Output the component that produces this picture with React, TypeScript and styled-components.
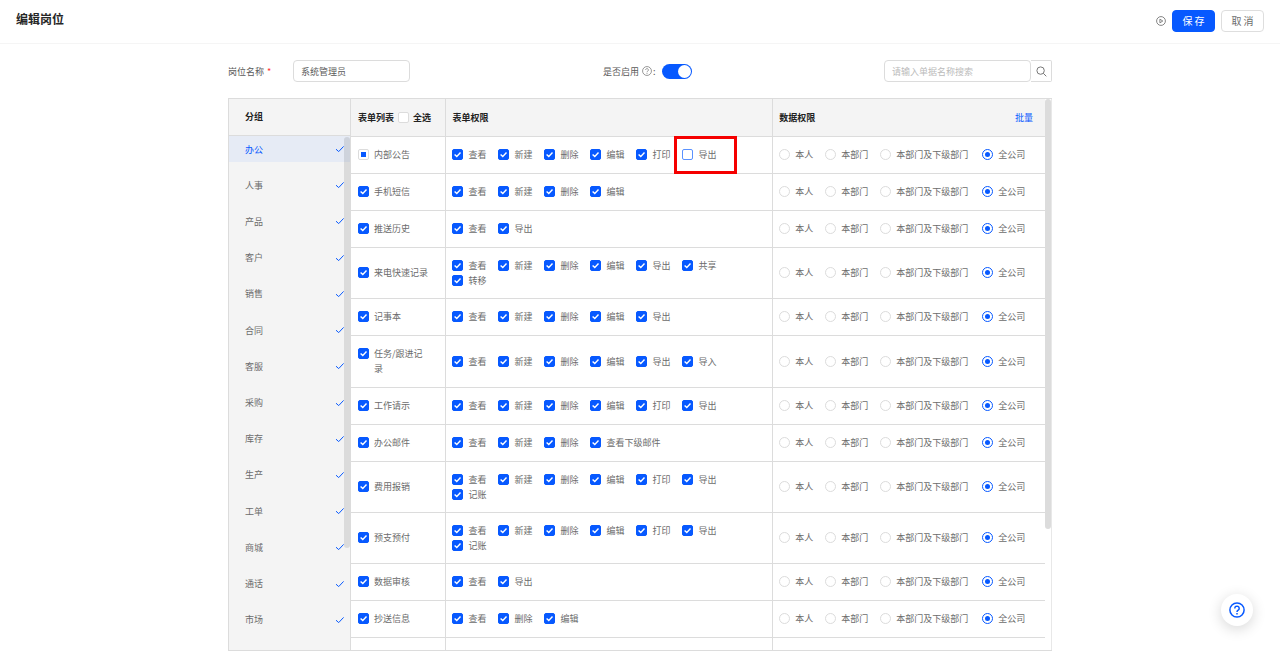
import React, { useState } from 'react';
import styled, { createGlobalStyle } from 'styled-components';

const GlobalStyle = createGlobalStyle`
  * { box-sizing: border-box; }
  body {
    margin: 0;
    background: #fff;
    color: #6c6c6c;
    font-family: "Noto Sans CJK SC", "Liberation Sans", sans-serif;
    font-size: 9px;
    line-height: 15px;
  }
  button, input { font: inherit; color: inherit; margin: 0; }
  button { cursor: pointer; }
`;

const BLUE = '#0759ff';
const LINE = '#dcdcdc';

const Page = styled.div`
  display: flex;
  flex-direction: column;
  height: 100vh;
  min-height: 400px;
`;

const Header = styled.header`
  display: flex;
  justify-content: space-between;
  align-items: flex-start;
  height: 44px;
  padding: 10px 16px 0;
  border-bottom: 1px solid #f5f5f5;
`;

const Title = styled.h1`
  margin: 0;
  font-size: 12px;
  line-height: 18px;
  font-weight: 700;
  color: #262626;
`;

const Actions = styled.div`
  display: flex;
  align-items: center;
  gap: 6px;
`;

const IconButton = styled.button`
  display: flex;
  padding: 0;
  border: 0;
  background: none;
  color: #777;
`;

const ActionButton = styled.button<{ $primary?: boolean }>`
  width: 43px;
  height: 22px;
  padding: 0;
  border-radius: 4px;
  border: 1px solid ${p => (p.$primary ? BLUE : '#dedede')};
  background: ${p => (p.$primary ? BLUE : '#fff')};
  color: ${p => (p.$primary ? '#fff' : '#6c6c6c')};
  font-size: 10px;
  line-height: 20px;
`;

const Main = styled.main`
  display: flex;
  flex-direction: column;
  flex: 1;
  min-height: 0;
  width: 100%;
  max-width: 824px;
  margin: 0 auto;
  padding: 16px 0;
`;

const FormRow = styled.form`
  display: grid;
  grid-template-columns: 375fr 281fr 168fr;
  align-items: center;
  margin-bottom: 16px;
`;

const Field = styled.div`
  display: flex;
  align-items: center;
  color: #5a5a5a;
`;

const NameLabel = styled.label`
  width: 65px;
`;

const Required = styled.span`
  margin-left: 3px;
  color: #f33;
`;

const TextInput = styled.input`
  width: 117px;
  height: 22px;
  padding: 0 7px;
  border: 1px solid ${LINE};
  border-radius: 4px;
  background: #fff;
`;

const HelpMark = styled.span`
  display: flex;
  margin: 0 1px 0 3px;
  color: #777;
`;

const Switch = styled.input`
  appearance: none;
  display: flex;
  align-items: center;
  width: 30px;
  height: 15px;
  margin-left: 6px;
  padding: 0 1px;
  border-radius: 8px;
  background: #bbb;
  &::before {
    content: '';
    width: 13px;
    height: 13px;
    border-radius: 50%;
    background: #fff;
  }
  &:checked {
    justify-content: flex-end;
    background: ${BLUE};
  }
`;

const SearchInput = styled(TextInput)`
  flex: 1;
  min-width: 0;
  &::placeholder { color: #bbb; }
`;

const SearchButton = styled.button`
  display: flex;
  align-items: center;
  justify-content: center;
  width: 21px;
  height: 22px;
  padding: 0;
  border: 1px solid ${LINE};
  border-left: 0;
  border-radius: 0 2px 2px 0;
  background: #fff;
  color: #777;
`;

const Panel = styled.div`
  display: flex;
  flex: 1;
  min-height: 0;
  border: 1px solid ${LINE};
  border-right: 0;
`;

const Groups = styled.nav`
  display: flex;
  flex-direction: column;
  width: 122px;
  background: #f4f4f4;
  border-right: 1px solid ${LINE};
`;

const GroupHead = styled.h2`
  margin: 0;
  height: 37px;
  padding: 0 16px;
  border-bottom: 1px solid ${LINE};
  font-size: 9px;
  line-height: 36px;
  font-weight: 700;
  color: #222;
`;

const GroupBody = styled.div`
  position: relative;
  flex: 1;
  min-height: 0;
  padding-bottom: 7px;
`;

const GroupList = styled.ul`
  display: flex;
  flex-direction: column;
  height: 100%;
  margin: 0;
  padding: 0;
  list-style: none;
`;

const GroupItem = styled.li`
  flex: 1;
`;

const GroupButton = styled.button<{ $active: boolean }>`
  display: flex;
  align-items: center;
  justify-content: space-between;
  width: 100%;
  height: 26px;
  padding: 0 5px 0 16px;
  border: 0;
  background: ${p => (p.$active ? '#e6ebf5' : 'transparent')};
  color: ${p => (p.$active ? BLUE : '#6c6c6c')};
  svg { color: ${BLUE}; }
`;

const GroupThumb = styled.div`
  position: absolute;
  top: 1px;
  right: 0;
  width: 6px;
  height: 80%;
  border-radius: 3px;
  background: rgba(0, 0, 0, 0.1);
`;

const TableArea = styled.div`
  flex: 1;
  min-width: 0;
  overflow: hidden;
`;

const Table = styled.table`
  width: 100%;
  table-layout: fixed;
  border-collapse: separate;
  border-spacing: 0;
`;

const Col = styled.col<{ $share: string }>`
  width: ${p => p.$share};
`;

const Th = styled.th`
  height: 38px;
  padding: 0 6px;
  border-bottom: 1px solid ${LINE};
  background: #f4f4f4;
  color: #222;
  font-weight: 700;
  text-align: left;
  & + & { border-left: 1px solid ${LINE}; }
  &:first-child { padding-left: 7px; }
`;

const HeadLine = styled.div`
  display: flex;
  align-items: center;
  gap: 4px;
`;

const DataHead = styled(HeadLine)`
  justify-content: space-between;
  padding-right: 6px;
`;

const BatchLink = styled.a`
  color: ${BLUE};
  font-weight: 400;
  text-decoration: none;
`;

const Td = styled.td`
  height: 37px;
  padding: 10px 6px 11px;
  border-bottom: 1px solid ${LINE};
  vertical-align: middle;
  & + & { border-left: 1px solid ${LINE}; }
  &:first-child { padding-left: 7px; padding-right: 15px; }
`;

const NameLabelRow = styled.label`
  display: flex;
  align-items: flex-start;
  gap: 5px;
`;

const NameBox = styled.span`
  display: flex;
  align-items: center;
  height: 15px;
`;

const PermList = styled.div`
  display: flex;
  flex-wrap: wrap;
  gap: 1px 12px;
  padding-right: 24px;
`;

const Choice = styled.label<{ $marked?: boolean }>`
  position: relative;
  display: flex;
  align-items: center;
  gap: 5px;
  height: 14px;
  white-space: nowrap;
  &::after {
    content: '';
    display: ${p => (p.$marked ? 'block' : 'none')};
    position: absolute;
    inset: -12px -21px -12px -8px;
    border: 3px solid #f50000;
    pointer-events: none;
  }
`;

const RadioList = styled.div`
  display: grid;
  grid-template-columns: 46px 55px 102px auto;
`;

const BoxFrame = styled.span`
  display: grid;
  flex: none;
  width: 11px;
  height: 11px;
  > * { grid-area: 1 / 1; }
  svg { pointer-events: none; color: #fff; }
`;

const Box = styled.input<{ $tone: 'plain' | 'focus' }>`
  appearance: none;
  width: 11px;
  height: 11px;
  border: 1px solid ${p => (p.$tone === 'focus' ? '#5a92ff' : LINE)};
  border-radius: 2px;
  background: #fff;
  &:checked { border-color: ${BLUE}; background: ${BLUE}; }
  &:indeterminate {
    display: grid;
    place-content: center;
    border-color: ${LINE};
    background: #fff;
  }
  &:indeterminate::before {
    content: '';
    width: 5px;
    height: 5px;
    background: ${BLUE};
  }
`;

const Radio = styled.input`
  appearance: none;
  display: grid;
  place-content: center;
  flex: none;
  width: 11px;
  height: 11px;
  border: 1px solid ${LINE};
  border-radius: 50%;
  background: #fff;
  &:checked { border-color: ${BLUE}; }
  &:checked::before {
    content: '';
    width: 5px;
    height: 5px;
    border-radius: 50%;
    background: ${BLUE};
  }
`;

const ScrollRail = styled.div`
  width: 7px;
  border-right: 1px solid #e8e8e8;
`;

const ScrollThumb = styled.div`
  width: 6px;
  height: 78%;
  border-radius: 3px;
  background: ${LINE};
`;

const HelpButton = styled.button`
  position: fixed;
  right: 27px;
  bottom: 41px;
  display: flex;
  align-items: center;
  justify-content: center;
  width: 32px;
  height: 32px;
  padding: 0;
  border: 0;
  border-radius: 50%;
  background: #fff;
  color: ${BLUE};
  box-shadow: 0 3px 14px rgba(0, 0, 0, 0.16);
`;

const PlayIcon = () => (
  <svg width="10" height="10" viewBox="0 0 10 10" fill="none" stroke="currentColor" strokeWidth="0.9">
    <circle cx="5" cy="5" r="4.4" />
    <path d="M3.9 3.2 6.8 5 3.9 6.8Z" strokeLinejoin="round" />
  </svg>
);

const QuestionIcon = ({ size, weight }: { size: number; weight: number }) => (
  <svg width={size} height={size} viewBox="0 0 16 16" fill="none" stroke="currentColor" strokeWidth={weight}>
    <circle cx="8" cy="8" r="7.1" />
    <path d="M5.8 6.4a2.2 2.2 0 1 1 3.4 1.8C8.4 8.7 8 9 8 9.9" />
    <path d="M8 11v1.6" />
  </svg>
);

const SearchIcon = () => (
  <svg width="11" height="11" viewBox="0 0 11 11" fill="none" stroke="currentColor" strokeWidth="1">
    <circle cx="4.6" cy="4.6" r="3.7" />
    <path d="M7.3 7.3 10.3 10.3" />
  </svg>
);

const GroupTick = () => (
  <svg width="10" height="10" viewBox="0 0 10 10" fill="none" stroke="currentColor" strokeWidth="1">
    <path d="M1 5.2 3.7 7.6 8.6 2.4" />
  </svg>
);

const BoxTick = () => (
  <svg width="11" height="11" viewBox="0 0 11 11" fill="none" stroke="currentColor" strokeWidth="1.4">
    <path d="M2.6 5.4 4.8 7.5 8.5 3.6" />
  </svg>
);

type CheckProps = { initial?: boolean; partial?: boolean; focusTone?: boolean; label?: string };

function CheckBox({ initial = false, partial = false, focusTone = false, label }: CheckProps) {
  const [checked, setChecked] = useState(initial);
  const [mixed, setMixed] = useState(partial);
  return (
    <BoxFrame>
      <Box
        type="checkbox"
        $tone={focusTone ? 'focus' : 'plain'}
        aria-label={label}
        checked={checked}
        ref={(el: HTMLInputElement | null) => {
          if (el) el.indeterminate = mixed;
        }}
        onChange={e => {
          setMixed(false);
          setChecked(e.target.checked);
        }}
      />
      {checked && !mixed && <BoxTick />}
    </BoxFrame>
  );
}

const groups = ['办公', '人事', '产品', '客户', '销售', '合同', '客服', '采购', '库存', '生产', '工单', '商城', '通话', '市场'];

const forms: { name: string; perms: string[]; off?: string }[] = [
  { name: '内部公告', perms: ['查看', '新建', '删除', '编辑', '打印', '导出'], off: '导出' },
  { name: '手机短信', perms: ['查看', '新建', '删除', '编辑'] },
  { name: '推送历史', perms: ['查看', '导出'] },
  { name: '来电快速记录', perms: ['查看', '新建', '删除', '编辑', '导出', '共享', '转移'] },
  { name: '记事本', perms: ['查看', '新建', '删除', '编辑', '导出'] },
  { name: '任务/跟进记录', perms: ['查看', '新建', '删除', '编辑', '导出', '导入'] },
  { name: '工作请示', perms: ['查看', '新建', '删除', '编辑', '打印', '导出'] },
  { name: '办公邮件', perms: ['查看', '新建', '删除', '查看下级邮件'] },
  { name: '费用报销', perms: ['查看', '新建', '删除', '编辑', '打印', '导出', '记账'] },
  { name: '预支预付', perms: ['查看', '新建', '删除', '编辑', '打印', '导出', '记账'] },
  { name: '数据审核', perms: ['查看', '导出'] },
  { name: '抄送信息', perms: ['查看', '删除', '编辑'] },
];

const scopes = ['本人', '本部门', '本部门及下级部门', '全公司'];

export default function App() {
  const [active, setActive] = useState('办公');
  return (
    <Page>
      <GlobalStyle />
      <Header>
        <Title>编辑岗位</Title>
        <Actions>
          <IconButton type="button" aria-label="播放"><PlayIcon /></IconButton>
          <ActionButton type="button" $primary>保 存</ActionButton>
          <ActionButton type="button">取 消</ActionButton>
        </Actions>
      </Header>
      <Main>
        <FormRow onSubmit={e => e.preventDefault()}>
          <Field>
            <NameLabel htmlFor="post-name">岗位名称<Required>*</Required></NameLabel>
            <TextInput id="post-name" defaultValue="系统管理员" />
          </Field>
          <Field>
            <label htmlFor="enabled">是否启用</label>
            <HelpMark><QuestionIcon size={10} weight={1.2} /></HelpMark>:
            <Switch id="enabled" type="checkbox" defaultChecked />
          </Field>
          <Field>
            <SearchInput type="text" aria-label="搜索" placeholder="请输入单据名称搜索" />
            <SearchButton type="submit" aria-label="搜索"><SearchIcon /></SearchButton>
          </Field>
        </FormRow>
        <Panel>
          <Groups>
            <GroupHead>分组</GroupHead>
            <GroupBody>
              <GroupList>
                {groups.map(g => (
                  <GroupItem key={g}>
                    <GroupButton type="button" $active={g === active} onClick={() => setActive(g)}>
                      {g}
                      <GroupTick />
                    </GroupButton>
                  </GroupItem>
                ))}
              </GroupList>
              <GroupThumb />
            </GroupBody>
          </Groups>
          <TableArea>
            <Table>
              <colgroup>
                <Col $share="13.6%" />
                <Col $share="47.1%" />
                <Col $share="39.3%" />
              </colgroup>
              <thead>
                <tr>
                  <Th>
                    <HeadLine>表单列表 <CheckBox label="全选" />全选</HeadLine>
                  </Th>
                  <Th>表单权限</Th>
                  <Th>
                    <DataHead>数据权限<BatchLink href="#batch">批量</BatchLink></DataHead>
                  </Th>
                </tr>
              </thead>
              <tbody>
                {forms.map((f, row) => (
                  <tr key={f.name}>
                    <Td>
                      <NameLabelRow>
                        <NameBox><CheckBox initial={!f.off} partial={!!f.off} /></NameBox>
                        <span>{f.name}</span>
                      </NameLabelRow>
                    </Td>
                    <Td>
                      <PermList>
                        {f.perms.map(p => (
                          <Choice key={p} $marked={p === f.off}>
                            <CheckBox initial={p !== f.off} focusTone={p === f.off} />
                            {p}
                          </Choice>
                        ))}
                      </PermList>
                    </Td>
                    <Td>
                      <RadioList>
                        {scopes.map(s => (
                          <Choice key={s}>
                            <Radio type="radio" name={`scope-${row}`} defaultChecked={s === '全公司'} />
                            {s}
                          </Choice>
                        ))}
                      </RadioList>
                    </Td>
                  </tr>
                ))}
                <tr>
                  <Td /><Td /><Td />
                </tr>
              </tbody>
            </Table>
          </TableArea>
          <ScrollRail><ScrollThumb /></ScrollRail>
        </Panel>
      </Main>
      <HelpButton type="button" aria-label="帮助"><QuestionIcon size={16} weight={1.5} /></HelpButton>
    </Page>
  );
}
